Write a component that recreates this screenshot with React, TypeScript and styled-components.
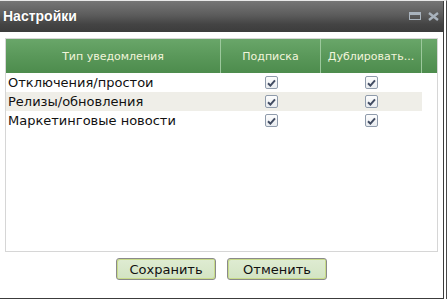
import styled, { createGlobalStyle } from 'styled-components';

const GlobalStyle = createGlobalStyle`
  html, body {
    margin: 0;
    padding: 0;
    background: #fff;
  }
  body {
    font-family: "DejaVu Sans", Verdana, sans-serif;
  }
`;

const rows = [
  { name: 'Отключения/простои', subscribe: true, duplicate: true },
  { name: 'Релизы/обновления', subscribe: true, duplicate: true },
  { name: 'Маркетинговые новости', subscribe: true, duplicate: true },
];

const Check = () => (
  <CheckBox>
    <svg width="9" height="8" viewBox="0 0 9 8">
      <path d="M1 4.2 L3.4 6.6 L8 1.4" fill="none" stroke="#424c62" strokeWidth="2" />
    </svg>
  </CheckBox>
);

const App = () => (
  <>
    <GlobalStyle />
    <Frame>
      <Dialog>
        <TitleBar>
          <Title>Настройки</Title>
          <Tools>
            <svg width="12" height="8" viewBox="0 0 12 8">
              <rect x="0.5" y="0.5" width="11" height="7" fill="none" stroke="#a9b3bd" />
              <rect x="0" y="0" width="12" height="3" fill="#a9b3bd" />
            </svg>
            <svg width="11" height="9" viewBox="0 0 11 9">
              <path d="M1 1 L10 8 M10 1 L1 8" stroke="#a9b3bd" strokeWidth="2.4" />
            </svg>
          </Tools>
        </TitleBar>
        <Body>
          <Panel>
            <Header>
              <HeadCell>Тип уведомления</HeadCell>
              <HeadCell>Подписка</HeadCell>
              <HeadCell>Дублировать...</HeadCell>
              <HeadCell />
            </Header>
            {rows.map((r, i) => (
              <Row key={r.name} $alt={i % 2 === 1}>
                <NameCell>{r.name}</NameCell>
                <CheckCell>{r.subscribe && <Check />}</CheckCell>
                <CheckCell>{r.duplicate && <Check />}</CheckCell>
              </Row>
            ))}
          </Panel>
          <Footer>
            <Button>Сохранить</Button>
            <Button>Отменить</Button>
          </Footer>
        </Body>
      </Dialog>
    </Frame>
  </>
);

const Frame = styled.div`
  width: 447px;
  height: 299px;
  box-sizing: border-box;
  border-right: 1px solid #4a4a4a;
  border-top: 1px solid #e8e8e8;
  padding-right: 2px;
  background: #fff;
`;

const Dialog = styled.div`
  height: 297px;
  border-right: 1px solid #3c3c3c;
  border-bottom: 1px solid #3c3c3c;
  display: flex;
  flex-direction: column;
`;

const TitleBar = styled.div`
  height: 31px;
  display: flex;
  align-items: center;
  justify-content: space-between;
  padding: 0 4px 0 3px;
  background: linear-gradient(#767676 0%, #5c5c5c 45%, #444 75%, #3c3c3c 100%);
`;

const Title = styled.div`
  color: #fff;
  font-family: "Liberation Sans", Arial, sans-serif;
  font-weight: bold;
  font-size: 14px;
  margin-top: -1px;
  text-shadow: 0 0 1px #333;
`;

const Tools = styled.div`
  display: flex;
  align-items: center;
  gap: 7px;
  margin-top: -1px;
`;

const Body = styled.div`
  flex: 1;
  display: flex;
  flex-direction: column;
  padding: 6px 5px 0 5px;
`;

const Panel = styled.div`
  width: 433px;
  height: 214px;
  box-sizing: border-box;
  border: 1px solid #d6d6d6;
`;

const Header = styled.div`
  display: grid;
  grid-template-columns: 215px 100px 101px 1fr;
  height: 34px;
  background: linear-gradient(#69a669, #5a985a 50%, #4d8c4d);
`;

const HeadCell = styled.div`
  display: flex;
  align-items: center;
  justify-content: center;
  border-right: 1px solid #9cc89c;
  color: #f2f5dc;
  font-size: 11px;
  white-space: nowrap;
  overflow: hidden;
  &:last-child {
    border-right: none;
  }
`;

const Row = styled.div<{ $alt: boolean }>`
  display: grid;
  grid-template-columns: 215px 100px 101px;
  height: 19px;
  align-items: center;
  background: ${(p) => (p.$alt ? '#efeee8' : '#fff')};
  width: 416px;
`;

const NameCell = styled.div`
  font-size: 13px;
  color: #111;
  padding-left: 2px;
  white-space: nowrap;
`;

const CheckCell = styled.div`
  display: flex;
  justify-content: center;
`;

const CheckBox = styled.span`
  width: 11px;
  height: 11px;
  border: 1px solid #8f9bab;
  border-radius: 2px;
  background: linear-gradient(#fdfdfd, #e9ecf0);
  display: flex;
  align-items: center;
  justify-content: center;
`;

const Footer = styled.div`
  display: flex;
  justify-content: center;
  gap: 11px;
  margin-top: 6px;
`;

const Button = styled.button`
  width: 100px;
  height: 22px;
  border: 1px solid #8a8a8a;
  border-radius: 3px;
  background: linear-gradient(#dfecd2, #d3e4c3);
  box-shadow: inset 1px 1px 0 #c8dc8a, inset -1px -1px 0 #c8dc8a;
  font-family: "DejaVu Sans", Verdana, sans-serif;
  font-size: 13px;
  color: #111;
  padding: 0;
`;

export default App;
